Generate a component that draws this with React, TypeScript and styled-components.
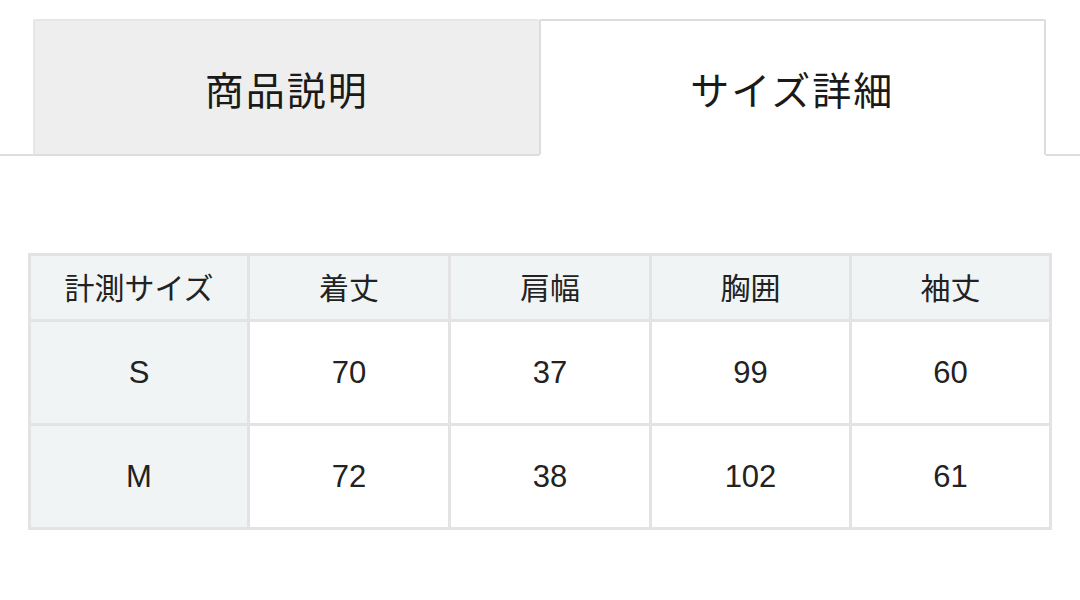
import styled, { createGlobalStyle } from "styled-components";

const GlobalStyle = createGlobalStyle`
  body {
    margin: 0;
    background: #ffffff;
    font-family: "Noto Sans CJK JP", "Noto Sans", sans-serif;
    color: #222222;
  }
`;

const headers = ["計測サイズ", "着丈", "肩幅", "胸囲", "袖丈"];
const colWidths = [219, 201, 201, 200, 200];

const rows = [
  { size: "S", values: ["70", "37", "99", "60"] },
  { size: "M", values: ["72", "38", "102", "61"] },
];

const App = () => {
  return (
    <>
      <GlobalStyle />
      <Page>
        <TabBar>
          <Tab>商品説明</Tab>
          <Tab $active>サイズ詳細</Tab>
        </TabBar>

        <SizeTable>
          <colgroup>
            {colWidths.map((w, i) => (
              <Col key={i} $width={w} />
            ))}
          </colgroup>
          <thead>
            <tr>
              {headers.map((h) => (
                <HeadCell key={h}>{h}</HeadCell>
              ))}
            </tr>
          </thead>
          <tbody>
            {rows.map((row) => (
              <tr key={row.size}>
                <Cell $label>{row.size}</Cell>
                {row.values.map((v, i) => (
                  <Cell key={i}>{v}</Cell>
                ))}
              </tr>
            ))}
          </tbody>
        </SizeTable>
      </Page>
    </>
  );
};

export default App;

const Page = styled.div`
  width: 1080px;
  height: 600px;
  padding-top: 19px;
  box-sizing: border-box;
  overflow: hidden;
`;

const TabBar = styled.div`
  display: flex;
  padding: 0 34px 0 33px;
  border-bottom: 2px solid #dddddd;
`;

const Tab = styled.div<{ $active?: boolean }>`
  flex: 1;
  height: 137px;
  margin-bottom: -2px;
  box-sizing: border-box;
  display: flex;
  align-items: center;
  justify-content: center;
  font-size: 39px;
  letter-spacing: 2px;
  color: #1a1a1a;
  background: ${({ $active }) => ($active ? "#ffffff" : "#eeeeee")};
  border: 2px solid ${({ $active }) => ($active ? "#dddddd" : "#e6e6e6")};
  border-bottom-color: ${({ $active }) => ($active ? "#ffffff" : "#dddddd")};
  border-right-width: ${({ $active }) => ($active ? "2px" : "0")};
  border-radius: 2px 2px 0 0;
`;

const SizeTable = styled.table`
  margin: 97px 0 0 28px;
  width: 1021px;
  table-layout: fixed;
  border-collapse: collapse;
  border: 3px solid #e3e3e3;
  font-family: "Liberation Sans", "Noto Sans CJK JP", sans-serif;
  font-size: 31px;
  color: #222222;
`;

const Col = styled.col<{ $width: number }>`
  width: ${({ $width }) => $width}px;
`;

const HeadCell = styled.th`
  height: 59px;
  padding: 0 0 4px;
  font-size: 30px;
  font-weight: 400;
  text-align: center;
  background: #f0f4f5;
  border: 3px solid #e3e3e3;
`;

const Cell = styled.td<{ $label?: boolean }>`
  height: 101px;
  padding: 0;
  text-align: center;
  background: ${({ $label }) => ($label ? "#f0f4f5" : "#ffffff")};
  border: 3px solid #e3e3e3;
`;
